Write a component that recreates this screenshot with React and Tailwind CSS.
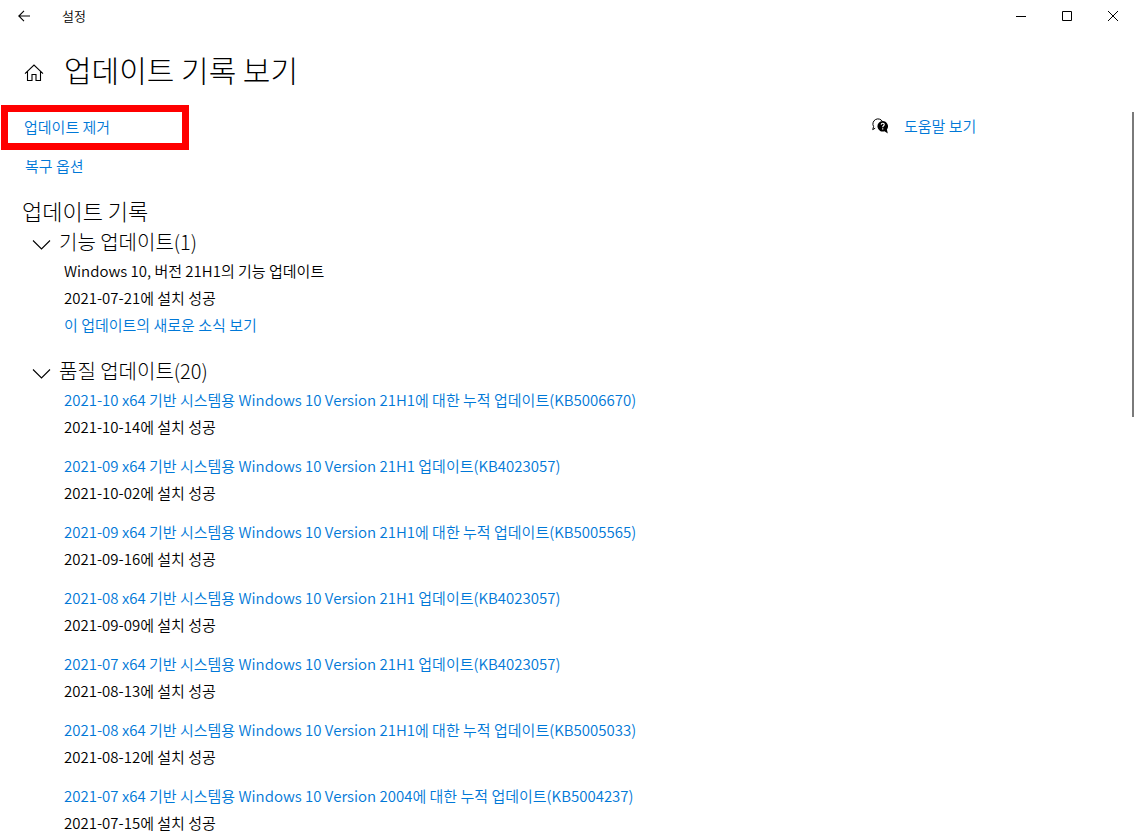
const qualityUpdates = [
  ["2021-10 x64 기반 시스템용 Windows 10 Version 21H1에 대한 누적 업데이트(KB5006670)", "2021-10-14에 설치 성공"],
  ["2021-09 x64 기반 시스템용 Windows 10 Version 21H1 업데이트(KB4023057)", "2021-10-02에 설치 성공"],
  ["2021-09 x64 기반 시스템용 Windows 10 Version 21H1에 대한 누적 업데이트(KB5005565)", "2021-09-16에 설치 성공"],
  ["2021-08 x64 기반 시스템용 Windows 10 Version 21H1 업데이트(KB4023057)", "2021-09-09에 설치 성공"],
  ["2021-07 x64 기반 시스템용 Windows 10 Version 21H1 업데이트(KB4023057)", "2021-08-13에 설치 성공"],
  ["2021-08 x64 기반 시스템용 Windows 10 Version 21H1에 대한 누적 업데이트(KB5005033)", "2021-08-12에 설치 성공"],
  ["2021-07 x64 기반 시스템용 Windows 10 Version 2004에 대한 누적 업데이트(KB5004237)", "2021-07-15에 설치 성공"],
];

function TextLink({ children }) {
  return (
    <a href="#" className="text-[#0078d7] hover:text-gray-500">
      {children}
    </a>
  );
}

function WindowButton({ label, children }) {
  return (
    <button type="button" aria-label={label} className="flex h-8 w-[46px] items-center justify-center hover:bg-gray-200">
      <svg width="10" height="10" viewBox="0 0 10 10" fill="none" stroke="#000" aria-hidden="true">
        {children}
      </svg>
    </button>
  );
}

function TitleBar() {
  return (
    <div className="flex h-8 items-center">
      <button type="button" aria-label="뒤로" className="flex h-8 w-12 items-center justify-center">
        <svg width="12" height="12" viewBox="0 0 12 12" fill="none" stroke="#000" strokeWidth="1.1" aria-hidden="true">
          <path d="M12 6H0.8M6 0.8L0.8 6L6 11.2" />
        </svg>
      </button>
      <span className="ml-3.5 grow pb-0.5 text-[13px]">설정</span>
      <WindowButton label="최소화">
        <path d="M0 5.5H10" />
      </WindowButton>
      <WindowButton label="최대화">
        <path d="M0.5 0.5H9.5V9.5H0.5Z" />
      </WindowButton>
      <WindowButton label="닫기">
        <path d="M0 0L10 10M10 0L0 10" />
      </WindowButton>
    </div>
  );
}

function HelpIcon() {
  return (
    <svg width="16" height="16" viewBox="0 0 16 16" aria-hidden="true">
      <path d="M3.2 10.2L0.7 11.6L1.6 8.6A4.9 4.9 0 1 1 10.4 3.4" fill="none" stroke="#000" strokeWidth="1" />
      <path d="M10.6 3a5.3 5.3 0 1 0 1.9 10.3l3.3 2.2-.9-4A5.3 5.3 0 0 0 10.6 3Z" fill="#000" />
      <path d="M9.2 6.6c.2-1.9 3.2-1.7 3 .1-.1 1.1-1.5 1.1-1.5 2.5M10.7 10.2v1.2" fill="none" stroke="#fff" strokeWidth="1.2" />
    </svg>
  );
}

function Section({ title, children }) {
  return (
    <section>
      <h3>
        <button type="button" aria-expanded="true" className="flex h-[30px] items-center gap-2 pl-8 text-xl font-light">
          <svg width="19" height="10" viewBox="0 0 19 10" fill="none" stroke="#000" strokeWidth="1.1" className="mt-1.5" aria-hidden="true">
            <path d="M1 0.5L9.5 9L18 0.5" />
          </svg>
          {title}
        </button>
      </h3>
      <div className="pl-16">{children}</div>
    </section>
  );
}

export default function App() {
  return (
    <div className="relative min-h-screen bg-white font-['Noto_Sans_CJK_KR',sans-serif] text-[15px] leading-[27px] font-[350] text-black">
      <TitleBar />
      <header className="flex h-[73px] items-center gap-5 pl-6">
        <a href="#" aria-label="홈">
          <svg width="20" height="18" viewBox="0 0 20 18" fill="none" stroke="#000" strokeWidth="1.1" className="mt-2" aria-hidden="true">
            <path d="M1 9.6L10 1L19 9.6M3.5 7.5V16.5H8V10.5H12V16.5H16.5V7.5" />
          </svg>
        </a>
        <h1 className="text-3xl font-light">업데이트 기록 보기</h1>
      </header>
      <main>
        <div className="flex items-start justify-between">
          <div className="pl-px">
            <div className="flex h-[45px] w-[188px] items-center border-[7px] border-[#ff0000] pb-0.5 pl-4">
              <TextLink>업데이트 제거</TextLink>
            </div>
            <div className="mt-0.5 pl-6">
              <TextLink>복구 옵션</TextLink>
            </div>
          </div>
          <div className="mt-[7px] flex w-[264px] items-center gap-4">
            <HelpIcon />
            <TextLink>도움말 보기</TextLink>
          </div>
        </div>
        <h2 className="mt-4 mb-0.5 pl-[22px] text-[22px] leading-[30px] font-light">업데이트 기록</h2>
        <Section title="기능 업데이트(1)">
          <p>Windows 10, 버전 21H1의 기능 업데이트</p>
          <p>2021-07-21에 설치 성공</p>
          <TextLink>이 업데이트의 새로운 소식 보기</TextLink>
        </Section>
        <div className="mt-[18px]">
          <Section title="품질 업데이트(20)">
            <ul className="flex flex-col gap-3">
              {qualityUpdates.map(([name, status]) => (
                <li key={name}>
                  <TextLink>{name}</TextLink>
                  <p>{status}</p>
                </li>
              ))}
            </ul>
          </Section>
        </div>
      </main>
      <div className="absolute top-28 right-0.5 h-[305px] w-0.5 bg-[#7a7a7a]" />
    </div>
  );
}
